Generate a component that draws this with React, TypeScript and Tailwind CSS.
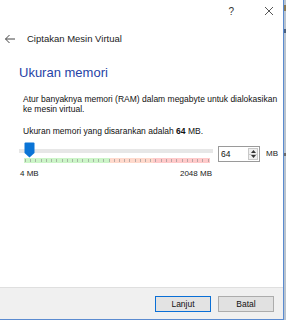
import { FC } from 'react';

const ticks = Array.from({ length: 36 });

const App: FC = () => {
  return (
    <div
      className="flex h-[320px] w-[286px] overflow-hidden bg-white text-[#1a1a1a]"
      style={{ fontFamily: '"Liberation Sans", Arial, sans-serif' }}
    >
      <div className="flex h-[320px] w-[284px] flex-col border-r border-b border-[#5b8bd0]">
        {/* Title bar */}
        <div className="flex h-[22px] items-center justify-end">
          <span className="mr-[30px] text-[10px] text-[#333]">?</span>
          <svg width="10" height="10" viewBox="0 0 10 10" className="mr-[9px]">
            <path d="M1 1 L9 9 M9 1 L1 9" stroke="#444" strokeWidth="0.9" />
          </svg>
        </div>

        {/* Back + wizard title */}
        <div className="mt-[12px] flex items-center">
          <svg width="12" height="10" viewBox="0 0 12 10" className="ml-[4px]">
            <path d="M11 5 H1.5 M5.5 1 L1.5 5 L5.5 9" stroke="#444" strokeWidth="1" fill="none" />
          </svg>
          <span className="ml-[11px] text-[9.5px] leading-none text-[#222]">Ciptakan Mesin Virtual</span>
        </div>

        {/* Content */}
        <div className="flex-1 pl-[19px]">
          <h2 className="mt-[22px] text-[13px] leading-none text-[#2643a6]">Ukuran memori</h2>
          <p className="mt-[15px] whitespace-nowrap pl-[4px] text-[8.5px] leading-[10px] text-[#111]">
            Atur banyaknya memori (RAM) dalam megabyte untuk dialokasikan
            <br />
            ke mesin virtual.
          </p>
          <p className="mt-[12px] pl-[4px] text-[8.5px] leading-[10px] text-[#111]">
            Ukuran memori yang disarankan adalah <b>64</b> MB.
          </p>

          <div className="mt-[6px] flex items-start">
            <div className="relative w-[196px]">
              {/* track */}
              <div className="mt-[7px] h-[4px] w-[194px] bg-[#e7e7e7]" />
              {/* thumb */}
              <svg width="11" height="16" viewBox="0 0 11 16" className="absolute left-[5px] top-[0px]">
                <path d="M0.5 1.5 Q0.5 0.5 1.5 0.5 H9.5 Q10.5 0.5 10.5 1.5 V11 L5.5 15.5 L0.5 11 Z" fill="#0a74d6" />
              </svg>
              {/* colored band */}
              <div className="relative ml-[5px] mt-[5px] flex h-[5px] w-[186px]">
                <div className="h-full w-[86px] bg-[#ccf5c8]" />
                <div className="h-full w-[43px] bg-[#ffd9cc]" />
                <div className="h-full w-[57px] bg-[#ffcaca]" />
                <div className="absolute inset-0 flex justify-between px-[1px]">
                  {ticks.map((_, i) => (
                    <div key={i} className="mt-[1px] h-[3px] w-px bg-[#8a8a8a] opacity-60" />
                  ))}
                </div>
              </div>
              <div className="mt-[7px] flex justify-between pl-[1px] pr-[3px] text-[8px] leading-none text-[#222]">
                <span>4 MB</span>
                <span>2048 MB</span>
              </div>
            </div>

            {/* spin box */}
            <div className="ml-[3px] mt-[4px] flex h-[16px] w-[42px] items-center border border-[#9a9a9a] bg-white">
              <span className="ml-[2px] flex-1 text-[8.5px] leading-none text-[#111]">64</span>
              <div className="mr-[1px] flex h-[12px] w-[10px] flex-col border border-[#c8c8c8] bg-[#efefef]">
                <div className="flex flex-1 items-center justify-center border-b border-[#c8c8c8]">
                  <svg width="5" height="3" viewBox="0 0 5 3"><path d="M0 3 L2.5 0 L5 3 Z" fill="#333" /></svg>
                </div>
                <div className="flex flex-1 items-center justify-center">
                  <svg width="5" height="3" viewBox="0 0 5 3"><path d="M0 0 L2.5 3 L5 0 Z" fill="#333" /></svg>
                </div>
              </div>
            </div>
            <span className="ml-[6px] mt-[8px] text-[8px] leading-none text-[#222]">MB</span>
          </div>
        </div>

        {/* Footer */}
        <div className="flex h-[32px] items-start justify-end gap-[7px] border-t border-[#dfdfdf] bg-[#f0f0f0] pr-[9px] pt-[8px]">
          <button className="h-[16px] w-[56px] border border-[#0a6fd6] bg-[#e3e3e3] text-[8.5px] leading-none text-[#111]">
            Lanjut
          </button>
          <button className="h-[16px] w-[56px] border border-[#acacac] bg-[#e1e1e1] text-[8.5px] leading-none text-[#111]">
            Batal
          </button>
        </div>
      </div>
      <div className="flex h-[320px] w-[2px] flex-col bg-[#b9c4d0]">
        <div className="mt-[5px] h-[6px] bg-[#8a7a55]" />
        <div className="mt-[18px] h-[4px] bg-[#4a6080]" />
        <div className="mt-[120px] h-[3px] bg-[#6b6b6b]" />
      </div>
    </div>
  );
};

export default App;
